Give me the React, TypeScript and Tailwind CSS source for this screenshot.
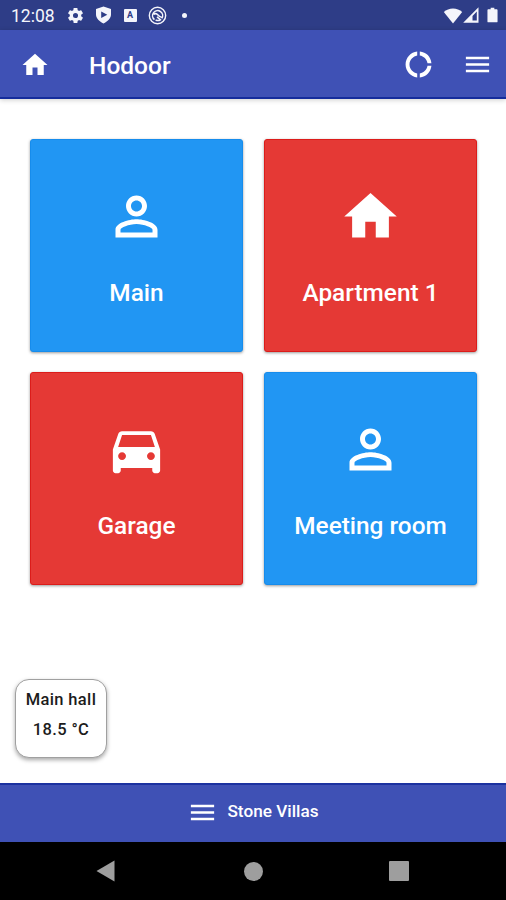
import type { ReactNode } from "react";

const HOME = "M10 20v-6h4v6h5v-8h3L12 3 2 12h3v8z";
const MENU = "M3 18h18v-2H3v2zm0-5h18v-2H3v2zm0-7v2h18V6H3z";
const DONUT =
  "M11 5.08V2c-5 .5-9 4.81-9 10s4 9.5 9 10v-3.08c-3-.48-6-3.4-6-6.92s3-6.44 6-6.92zM18.97 11H22c-.47-5-4-8.53-9-9v3.08C16 5.51 18.54 8 18.97 11zM13 18.92V22c5-.47 8.53-4 9-9h-3.03c-.43 3-2.97 5.49-5.97 5.92z";
const PERSON =
  "M12 5.9c1.16 0 2.1.94 2.1 2.1s-.94 2.1-2.1 2.1S9.9 9.16 9.9 8s.94-2.1 2.1-2.1m0 9c2.97 0 6.1 1.46 6.1 2.1v1.1H5.9V17c0-.64 3.13-2.1 6.1-2.1M12 4C9.79 4 8 5.79 8 8s1.79 4 4 4 4-1.79 4-4-1.79-4-4-4zm0 9c-2.67 0-8 1.34-8 4v3h16v-3c0-2.66-5.33-4-8-4z";
const CAR =
  "M18.92 6.01C18.72 5.42 18.16 5 17.5 5h-11c-.66 0-1.21.42-1.42 1.01L3 12v8c0 .55.45 1 1 1h1c.55 0 1-.45 1-1v-1h12v1c0 .55.45 1 1 1h1c.55 0 1-.45 1-1v-8l-2.08-5.99zM6.5 16c-.83 0-1.5-.67-1.5-1.5S5.67 13 6.5 13s1.5.67 1.5 1.5S7.33 16 6.5 16zm11 0c-.83 0-1.5-.67-1.5-1.5s.67-1.5 1.5-1.5 1.5.67 1.5 1.5-.67 1.5-1.5 1.5zM5 11l1.5-4.5h11L19 11H5z";
const GEAR =
  "M19.14 12.94c.04-.3.06-.61.06-.94 0-.32-.02-.64-.07-.94l2.03-1.58c.18-.14.23-.41.12-.61l-1.92-3.32c-.12-.22-.37-.29-.59-.22l-2.39.96c-.5-.38-1.03-.7-1.62-.94l-.36-2.54c-.04-.24-.24-.41-.48-.41h-3.84c-.24 0-.43.17-.47.41l-.36 2.54c-.59.24-1.13.57-1.62.94l-2.39-.96c-.22-.08-.47 0-.59.22L2.74 8.87c-.12.21-.08.47.12.61l2.03 1.58c-.05.3-.09.63-.09.94s.02.64.07.94l-2.03 1.58c-.18.14-.23.41-.12.61l1.92 3.32c.12.22.37.29.59.22l2.39-.96c.5.38 1.03.7 1.62.94l.36 2.54c.05.24.24.41.48.41h3.84c.24 0 .44-.17.47-.41l.36-2.54c.59-.24 1.13-.56 1.62-.94l2.39.96c.22.08.47 0 .59-.22l1.92-3.32c.12-.22.07-.47-.12-.61l-2.01-1.58zM12 15.2a3.2 3.2 0 1 1 0-6.4 3.2 3.2 0 0 1 0 6.400z";

function Icon({ d, className }: { d: string; className: string }) {
  return (
    <svg viewBox="0 0 24 24" className={className} fill="currentColor">
      <path d={d} fillRule="evenodd" />
    </svg>
  );
}

function StatusBar() {
  return (
    <div className="flex h-[30px] shrink-0 items-center bg-[#2e3d87] pl-[11px] pr-[8px] text-[#f4f5fb]">
      <span className="mt-[3px] w-[55px] text-[17.5px] leading-none">12:08</span>
      <Icon d={GEAR} className="h-[19px] w-[19px]" />
      <svg viewBox="0 0 16 18" className="ml-[9.5px] h-[18px] w-[17px]" fill="currentColor">
        <path fillRule="evenodd" d="M8 0.5 15.500 3v5.5c0 4-3.500 7-7.500 9C4 15.500.5 12.500.5 8.500V3zM5.700 5.500v6.500l6.100-3.250z" />
      </svg>
      <div className="ml-[12px] flex h-[13px] w-[13px] items-center justify-center rounded-[1px] bg-[#f4f5fb] text-[9px] font-bold leading-none text-[#2e3d87]">
        A
      </div>
      <svg viewBox="0 0 20 20" className="ml-[11px] h-[19px] w-[19px]" fill="none" stroke="currentColor">
        <circle cx="10" cy="10" r="8.600" strokeWidth="1.500" />
        <path d="M6.800 14.300a5.300 5.300 0 1 1 7.700-1.200M5.800 8.800c2-1.500 3.500-.8 4.700.7s2.500 2 4 2.500M8 14.500c1.500 1 3.500 1 5 0l-3.500-3" strokeWidth="1.600" />
      </svg>
      <div className="ml-[15.5px] h-[5px] w-[5px] rounded-full bg-current" />
      <div className="grow" />
      <svg viewBox="0 0 20 17" className="h-[17px] w-[20px]" fill="currentColor">
        <path d="M10 16.500 .8 5C5.500 .3 14.500 .3 19.200 5z" />
      </svg>
      <svg viewBox="0 0 16 16" className="ml-[0.5px] h-[16px] w-[16px]">
        <path fill="currentColor" fillRule="evenodd" d="M15.500 .3v15.400H.2zM13.800 4.500 9.500 9v4.500h4.300z" />
      </svg>
      <svg viewBox="0 0 12 18" className="ml-[8px] h-[18px] w-[11px]" fill="currentColor">
        <path d="M4 1h4v1.800h2.500c.5 0 1 .5 1 1v12.200c0 .6-.5 1-1 1h-9c-.5 0-1-.4-1-1V3.800c0-.5.500-1 1-1H4z" />
      </svg>
    </div>
  );
}

function Tile({ color, icon, children }: { color: string; icon: string; children: ReactNode }) {
  return (
    <button
      className={`flex h-[213px] w-[213px] flex-col items-center rounded-[3px] border pt-[45px] text-white shadow-[0_1px_3px_rgba(0,0,0,0.4)] ${color}`}
    >
      <Icon d={icon} className="h-[63px] w-[63px] shrink-0" />
      <span className="mt-[30.5px] text-[24.4px] font-medium leading-[28px]">{children}</span>
    </button>
  );
}

const BLUE = "bg-[#2196f3] border-[#168cec]";
const RED = "bg-[#e53935] border-[#dc1c1a]";

export default function App() {
  return (
    <div className="flex h-[900px] w-[506px] flex-col overflow-hidden bg-white font-['Roboto',sans-serif]">
      <StatusBar />
      <header className="z-10 flex h-[69px] shrink-0 items-center border-b-2 border-[#152c9c] bg-[#3f51b5] pl-[20px] pr-[13px] pt-[2px] text-white shadow-[0_1px_5px_rgba(0,0,0,0.2)]">
        <Icon d={HOME} className="h-[30px] w-[30px]" />
        <h1 className="ml-[39px] mt-[3px] grow text-[24.5px] font-medium leading-none">Hodoor</h1>
        <Icon d={DONUT} className="h-[31px] w-[31px]" />
        <Icon d={MENU} className="ml-[28px] h-[31px] w-[31px]" />
      </header>
      <main className="flex grow flex-col px-[30px] pt-[40px]">
        <div className="grid grid-cols-[213px_213px] gap-x-[21px] gap-y-[20px]">
          <Tile color={BLUE} icon={PERSON}>Main</Tile>
          <Tile color={RED} icon={HOME}>Apartment 1</Tile>
          <Tile color={RED} icon={CAR}>Garage</Tile>
          <Tile color={BLUE} icon={PERSON}>Meeting room</Tile>
        </div>
        <div className="-ml-[15px] mt-[94px] flex h-[79px] w-[92px] flex-col items-center rounded-[14px] border border-[#a0a0a0] bg-white pt-[5px] text-[16.5px] font-medium leading-[29.500px] tracking-[0.35px] text-[#1c1c1c] shadow-[0_2px_4px_rgba(0,0,0,0.35)]">
          <span>Main hall</span>
          <span>18.5 °C</span>
        </div>
      </main>
      <footer className="flex h-[59px] shrink-0 items-center justify-center border-t-2 border-[#1c32a0] bg-[#3f51b5] pb-[3px] text-white">
        <Icon d={MENU} className="h-[31px] w-[31px]" />
        <span className="ml-[9px] text-[17.2px] font-medium">Stone Villas</span>
      </footer>
      <nav className="flex h-[58px] shrink-0 items-center bg-black pl-[96px] text-[#9e9e9e]">
        <svg viewBox="0 0 19 22" className="h-[22px] w-[19px]" fill="currentColor">
          <path d="M18.500 .5v21L.5 11z" />
        </svg>
        <div className="ml-[129px] h-[19px] w-[19px] rounded-full bg-current" />
        <div className="ml-[126px] h-[20px] w-[20px] rounded-[1px] bg-current" />
      </nav>
    </div>
  );
}
